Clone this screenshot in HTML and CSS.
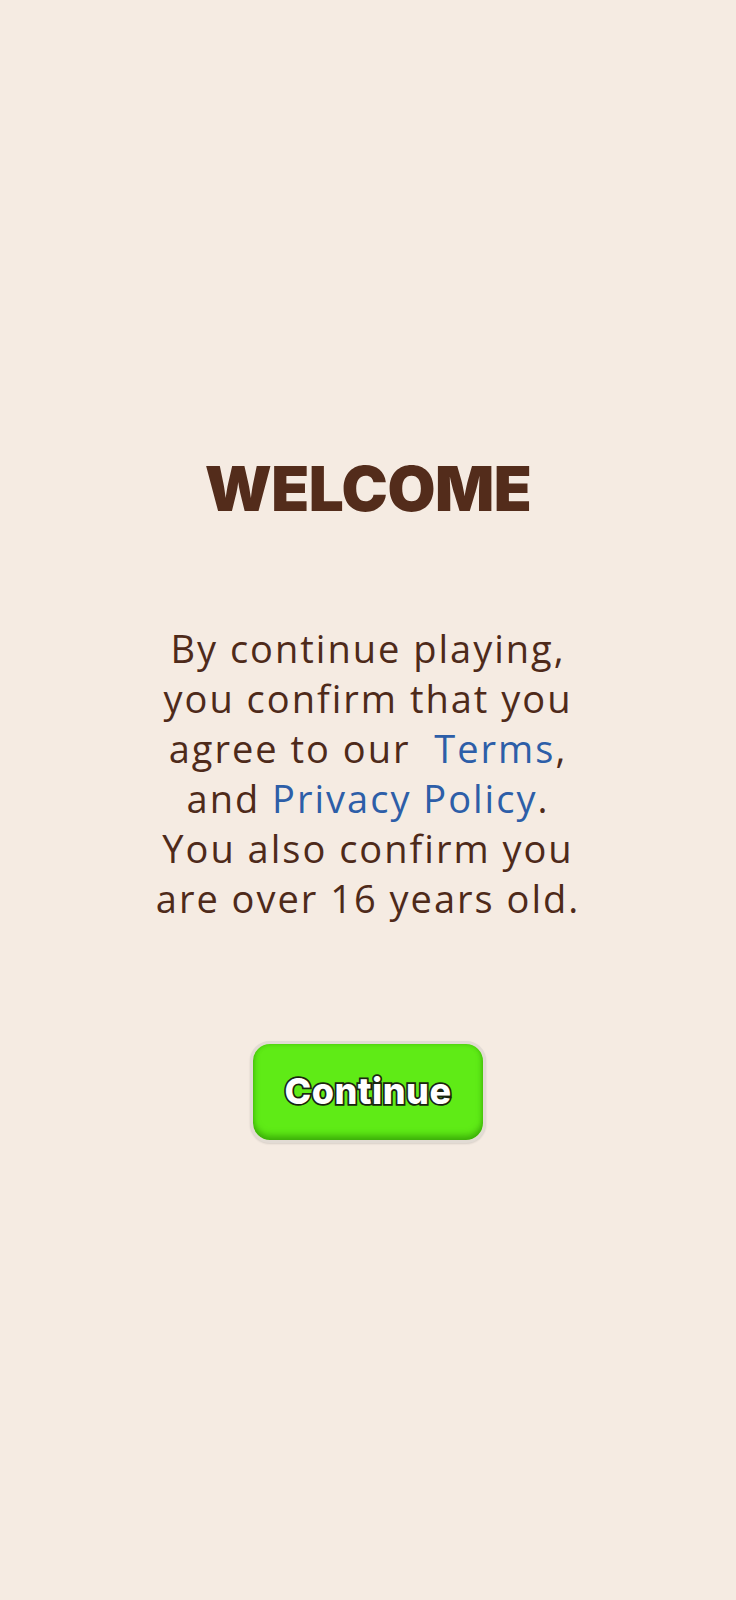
FILE: index.html
```html
<!DOCTYPE html>
<html lang="en">
<head>
<meta charset="utf-8">
<title>Welcome</title>
<link rel="stylesheet" href="styles.css">
</head>
<body>
<main class="screen">
  <h1 class="title">WELCOME</h1>
  <p class="consent">By continue playing,<br>you confirm that you<br>agree to our&nbsp; <a class="link" href="#">Terms</a>,<br>and <a class="link" href="#">Privacy Policy</a>.<br>You also confirm you<br>are over 16 years old.</p>
  <button class="continue" type="button"><span class="continue-label">Continue</span></button>
</main>
</body>
</html>
```
FILE: styles.css
```css
html, body {
  margin: 0;
  padding: 0;
  background: #f5ebe2;
}
.screen {
  width: 736px;
  height: 1600px;
  display: flex;
  flex-direction: column;
  align-items: center;
  padding-top: 451px;
  box-sizing: border-box;
}
.title {
  margin: 0;
  font-family: "Inter", sans-serif;
  font-weight: 900;
  font-size: 62px;
  line-height: 76px;
  color: #532c1b;
  letter-spacing: -0.5px;
}
.consent {
  margin: 96px 0 0;
  font-family: "Open Sans", sans-serif;
  font-weight: 400;
  font-size: 38px;
  line-height: 50px;
  color: #4e2a1a;
  text-align: center;
  letter-spacing: 2px;
}
.link {
  color: #2d5ea8;
  text-decoration: none;
}
.continue {
  margin-top: 118px;
  width: 236px;
  height: 102px;
  box-sizing: border-box;
  border: 3px solid #e2dbd4;
  border-radius: 20px;
  background: #5feb16;
  box-shadow: inset 0 -5px 6px rgba(40, 140, 0, 0.55), inset 0 0 4px rgba(40, 140, 0, 0.4), 0 1px 2px rgba(0, 0, 0, 0.12);
  display: flex;
  align-items: center;
  justify-content: center;
  padding: 0;
}
.continue-label {
  font-family: "Inter", sans-serif;
  font-weight: 800;
  font-size: 36px;
  color: #ffffff;
  -webkit-text-stroke: 3.5px #1a2410;
  paint-order: stroke fill;
  letter-spacing: 0.5px;
  margin-top: -2px;
}
```
